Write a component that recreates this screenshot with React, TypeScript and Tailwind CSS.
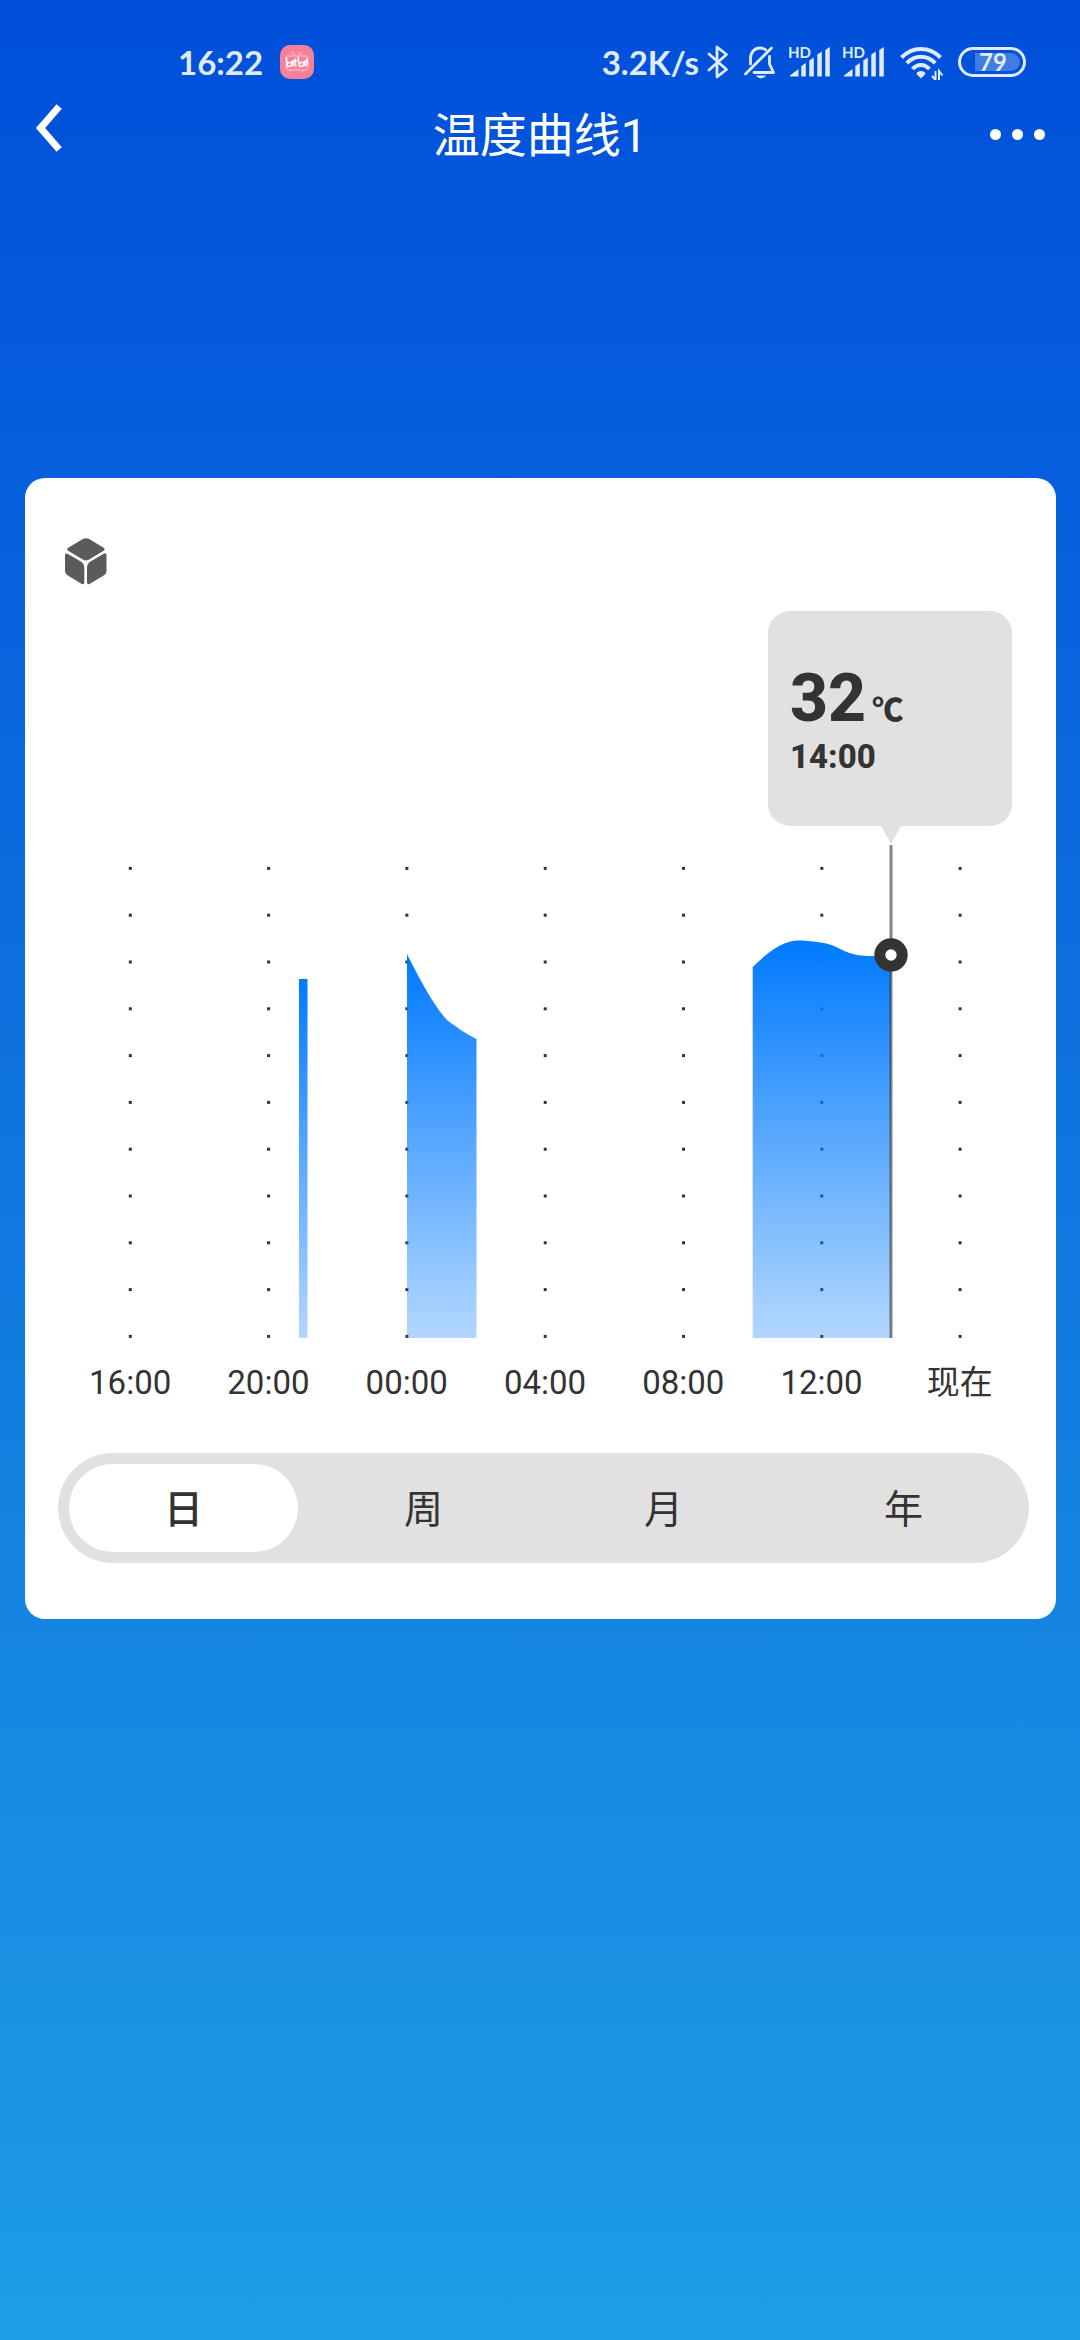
import { useState } from 'react';

const hours = ['16:00', '20:00', '00:00', '04:00', '08:00', '12:00', '现在'];
const ranges = ['日', '周', '月', '年'];

// Dot grid: one column per label, eleven rows
const dotColumns = hours.map((_, i) => 69.1 + i * 138.3);
const dotRows = Array.from({ length: 11 }, (_, i) => 23.4 + i * 46.8);

const areas = [
  'M238 134H246.5V493H238Z',
  'M346 109C355 127 372 160 386 175C395 182 407 190 415.5 194V493H346Z',
  'M691.7 122C706 108 722 95 738 95.5C748 95.5 768 98 774 101.5C786 107 792 111 810 111H830V493H691.7Z',
];

function AppBadge() {
  return (
    <svg width="34" height="34" viewBox="0 0 34 34" fill="none" aria-hidden="true">
      <rect width="34" height="34" rx="10" fill="#f4809a" />
      <g stroke="#f9a3b5" strokeWidth="2">
        <rect x="6.5" y="11" width="21" height="14" rx="2.5" />
        <path d="M12 7l4 4M22 7l-4 4M11 25v2M23 25v2" />
      </g>
      <g stroke="#fff" strokeWidth="1.6" strokeLinejoin="round">
        <path d="M6 12l1.5 9.5c3.5 0 4.5-1 4.5-2.5s-2-2-4.5-1M13 16l.6 5.5M15 13.5l.8 8M11.5 16.5l5.5-1" />
        <path d="M18 12l1.5 9.5c3.5 0 4.5-1 4.5-2.5s-2-2-4.5-1M25 16l.6 5.5M27 13.5l.6 7M23.5 16.5l4.5-1" />
      </g>
    </svg>
  );
}

function Bluetooth() {
  return (
    <svg width="26" height="36" viewBox="0 0 26 36" fill="none" stroke="currentColor" strokeWidth="2.8" strokeLinejoin="round" strokeLinecap="round" aria-hidden="true">
      <path d="M4 10l17.5 15.5L12 33V3l9.5 7.5L4 26" />
    </svg>
  );
}

function BellOff() {
  return (
    <svg width="34" height="36" viewBox="0 0 34 36" fill="none" stroke="currentColor" strokeWidth="2.8" strokeLinecap="round" aria-hidden="true">
      <path d="M2.5 30L28.5 4" />
      <path d="M7.5 20v-5.5c0-6 4-10.5 9.5-10.5 2 0 4 .6 5.5 1.7" />
      <path d="M26.5 12.5V20l4 8.5H11" strokeLinejoin="round" />
      <path d="M13 31.5h10c-1 2-3 2.7-5 2.7s-4-.7-5-2.7Z" fill="currentColor" stroke="none" />
    </svg>
  );
}

function Signal() {
  return (
    <svg width="42" height="36" viewBox="0 0 42 36" fill="currentColor" aria-label="HD">
      <text x="-1" y="14" className="font-['Lato',sans-serif] text-[15px] font-bold">HD</text>
      <path d="M1 31.5L9.5 25v7.5H2c-1 0-1-.5-1-1ZM12.3 22l4.500-3v13.500h-4.500ZM20.3 16.500l4.500-3v19h-4.500ZM28.3 10.500l4.500-3v25h-4.500ZM36.3 6l4.500-3v29.500h-4.500Z" />
    </svg>
  );
}

function Wifi() {
  return (
    <svg width="49" height="36" viewBox="0 0 49 36" fill="none" stroke="currentColor" strokeWidth="4" aria-hidden="true">
      <path d="M4.5 13.5C15.5 2 32.5 2 43.5 13.5" />
      <path d="M9.8 19.2C18 10.7 30 10.7 38.2 19.2" />
      <path d="M15.5 25C20.5 19.5 27.5 19.5 32.5 25" />
      <path d="M24 34.5l-4.5-4.5c0-4 9-4 9 0Z" fill="currentColor" stroke="none" />
      <path d="M38.5 27v9l-3.5-4M42 37v-10l3.5 4.5" strokeWidth="2" />
    </svg>
  );
}

function Battery() {
  return (
    <div className="flex h-[30px] w-[68px] items-center rounded-full border-[3px] border-current pr-[3px] pl-[14px]">
      <div className="flex h-[18px] flex-1 items-center rounded-l-xs rounded-r-full bg-white/25 pl-1 text-[24px] leading-none">
        79
      </div>
    </div>
  );
}

function StatusBar() {
  return (
    <div className="flex h-[84px] items-center justify-between pt-10 pr-[54px] pl-[178px] font-['Lato',sans-serif] text-[33px] leading-none font-bold text-[#dfebff]">
      <div className="flex items-center gap-[17px]">
        <span>16:22</span>
        <AppBadge />
      </div>
      <div className="flex items-center gap-3">
        <div className="flex items-center gap-[6px]">
          <span>3.2K/s</span>
          <Bluetooth />
        </div>
        <BellOff />
        <Signal />
        <Signal />
        <Wifi />
        <Battery />
      </div>
    </div>
  );
}

function Header() {
  return (
    <header className="grid h-[100px] grid-cols-[1fr_auto_1fr] items-center px-[33px] text-white">
      <button type="button" aria-label="返回" className="justify-self-start">
        <svg width="32" height="60" viewBox="0 0 32 60" fill="none" stroke="currentColor" strokeWidth="7">
          <path d="M26.2 2.5L7.5 24L26.2 45.5" />
        </svg>
      </button>
      <h1 className="pt-[2px] text-[47px] leading-none">温度曲线1</h1>
      <button type="button" aria-label="更多" className="flex gap-[11px] justify-self-end pr-[2px]">
        <span className="size-[11px] rounded-full bg-white" />
        <span className="size-[11px] rounded-full bg-white" />
        <span className="size-[11px] rounded-full bg-white" />
      </button>
    </header>
  );
}

function CubeIcon() {
  return (
    <svg width="42" height="47" viewBox="0 0 42 47" fill="#5b5b5b" className="ml-[7px]" aria-hidden="true">
      <path d="M17.8 1.1Q21 -.6 24.2 1.1L38.6 9.8Q40.6 11.3 38.6 12.8L24.2 21.6Q21 23.3 17.8 21.6L3.2 12.8Q1 11.3 3.2 9.8Z" />
      <path d="M0 16.8Q.3 14.8 2.5 15.7L16.2 23.8Q19.3 25.8 19.3 29V44.5Q19 46.8 16.8 45.9L3.3 37.8Q0 35.8 0 32.5Z" />
      <path d="M41.5 16.8Q41.2 14.6 39 15.4L25 23.8Q22 25.8 22 29V44.5Q22.3 46.8 24.5 45.9L38.2 37.8Q41.5 35.8 41.5 32.5Z" />
    </svg>
  );
}

function Tooltip() {
  return (
    <div className="relative flex h-[215px] w-[244px] flex-col justify-center rounded-[22px] bg-[#e1e1e1] pt-[11px] pl-[22px] font-extrabold">
      <p className="flex items-baseline gap-[6px] text-[66px] leading-[54px]">
        32<span className="text-[31px]">℃</span>
      </p>
      <p className="text-[33px] leading-[38px]">14:00</p>
      <svg width="20" height="18" viewBox="0 0 20 18" fill="#e1e1e1" className="absolute top-full left-[113px]">
        <path d="M0 0H20L10 18Z" />
      </svg>
    </div>
  );
}

function Chart() {
  return (
    <svg viewBox="0 0 968 493" className="mt-[19px] block h-auto w-full" role="img" aria-label="温度曲线">
      <g fill="#333">
        {dotColumns.map((x) =>
          dotRows.map((y) => <rect key={`${x}-${y}`} x={x - 1.3} y={y - 1.5} width="3" height="3" />),
        )}
      </g>
      <defs>
        <linearGradient id="area" x1="0" y1="0" x2="0" y2="1">
          <stop offset="0" stopColor="#007aff" />
          <stop offset="1" stopColor="#007aff" stopOpacity="0.3" />
        </linearGradient>
      </defs>
      {areas.map((d) => (
        <path key={d} d={d} fill="url(#area)" />
      ))}
      <path d="M830 0V493" stroke="#333" strokeOpacity="0.6" strokeWidth="3" />
      <circle cx="830" cy="110" r="11.2" fill="#fff" stroke="#333" strokeWidth="11" />
    </svg>
  );
}

function RangeTabs() {
  const [active, setActive] = useState('日');

  return (
    <div role="tablist" className="mt-[50px] grid grid-cols-4 gap-[11px] rounded-full bg-[#e1e1e1] p-[11px]">
      {ranges.map((r) => (
        <button
          key={r}
          type="button"
          role="tab"
          aria-selected={r === active}
          onClick={() => setActive(r)}
          className={`h-[88px] rounded-full pt-1 text-[39px] leading-none ${r === active ? 'bg-white font-medium' : ''}`}
        >
          {r}
        </button>
      ))}
    </div>
  );
}

export default function App() {
  return (
    <div lang="zh-CN" className="min-h-screen bg-linear-to-b/srgb from-[#004fda] to-[#1e9de4] font-['Roboto','Noto_Sans_CJK_SC',sans-serif]">
      <StatusBar />
      <Header />
      <main className="mt-[294px] mr-6 ml-[25px] rounded-[20px] bg-white pt-[60px] pr-[27px] pb-14 pl-[33px] text-[#333]">
        <CubeIcon />
        <div className="mt-[26px] pl-[3px]">
          <div className="flex justify-end pr-[17px]">
            <Tooltip />
          </div>
          <Chart />
          <div className="mt-[25px] grid grid-cols-7 text-center text-[33px] leading-10">
            {hours.map((h) => (
              <span key={h}>{h}</span>
            ))}
          </div>
        </div>
        <RangeTabs />
      </main>
    </div>
  );
}
